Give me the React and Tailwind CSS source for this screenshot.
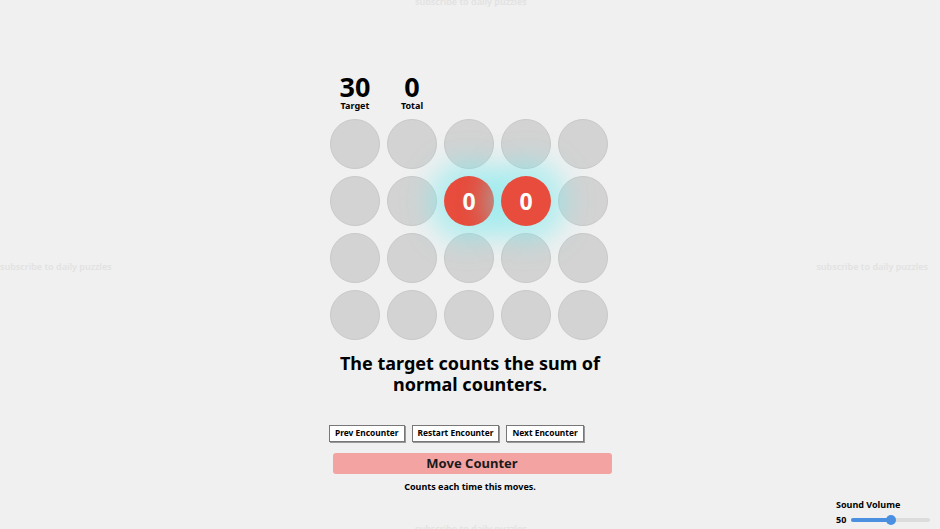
const grid = [
  [0, 0, 0, 0, 0],
  [0, 0, 1, 1, 0],
  [0, 0, 0, 0, 0],
  [0, 0, 0, 0, 0],
];

function Cell({ active }) {
  if (active) {
    return (
      <div className="relative z-10 w-[50px] h-[50px] rounded-full bg-[#e74c3c] flex items-center justify-center text-white text-[23px] font-bold leading-none shadow-[0_0_26px_16px_rgba(120,235,240,0.5)]">
        0
      </div>
    );
  }
  return <div className="w-[50px] h-[50px] rounded-full bg-[#d3d3d3] border border-[#c9c9c9]" />;
}

export default function App() {
  const faint = "absolute text-[9px] text-[#e2e2e2] font-semibold whitespace-nowrap";
  return (
    <div className="relative w-[940px] h-[529px] overflow-hidden bg-[#f0f0f0] text-black font-['Noto_Sans',sans-serif]">
      {/* faint edge links */}
      <div className={`${faint} top-[-5px] left-[415px]`}>subscribe to daily puzzles</div>
      <div className={`${faint} top-[260px] left-0`}>subscribe to daily puzzles</div>
      <div className={`${faint} top-[260px] right-[12px]`}>subscribe to daily puzzles</div>
      <div className={`${faint} top-[522px] left-[415px]`}>subscribe to daily puzzles</div>

      <div className="flex flex-col items-center pt-[73px]">
        <div className="w-[278px] flex gap-[7px] ml-[-2px]">
          <div className="w-[50px] flex flex-col items-center">
            <div className="text-[27px] font-bold leading-[28px]">30</div>
            <div className="text-[9px] font-bold leading-[10px]">Target</div>
          </div>
          <div className="w-[50px] flex flex-col items-center">
            <div className="text-[27px] font-bold leading-[28px]">0</div>
            <div className="text-[9px] font-bold leading-[10px]">Total</div>
          </div>
        </div>

        <div className="mt-[8px] grid grid-cols-5 gap-[7px] w-[278px] ml-[-2px]">
          {grid.flatMap((row, r) =>
            row.map((v, c) => <Cell key={`${r}-${c}`} active={v === 1} />)
          )}
        </div>

        <div className="mt-[13px] text-center text-[18px] font-bold leading-[21px] w-[290px]">
          The target counts the sum of normal counters.
        </div>

        <div className="mt-[30px] w-[282px] flex gap-[7px]">
          {["Prev Encounter", "Restart Encounter", "Next Encounter"].map((t) => (
            <button
              key={t}
              className="bg-white border border-[#777] shadow-[1px_1px_0_#999] px-[5px] h-[17px] text-[8.4px] font-bold leading-none"
            >
              {t}
            </button>
          ))}
        </div>

        <button className="mt-[11px] ml-[4px] w-[279px] h-[21px] rounded-[3px] bg-[#f4a3a3] text-[13px] font-bold leading-none text-[#1a1a1a]">
          Move Counter
        </button>
        <div className="mt-[6px] text-[9px] font-bold">Counts each time this moves.</div>
      </div>

      {/* sound volume */}
      <div className="absolute left-[836px] top-[499px] flex flex-col">
        <div className="text-[9px] font-bold leading-[12px]">Sound Volume</div>
        <div className="flex items-center gap-[5px] mt-[4px]">
          <span className="text-[9px] font-bold leading-none">50</span>
          <div className="relative w-[79px] h-[4px] rounded-full bg-[#dcdcdc]">
            <div className="absolute left-0 top-0 h-[4px] w-[40px] rounded-full bg-[#4a8fe0]" />
            <div className="absolute left-[35px] top-[-3px] w-[10px] h-[10px] rounded-full bg-[#4a8fe0]" />
          </div>
        </div>
      </div>
    </div>
  );
}
